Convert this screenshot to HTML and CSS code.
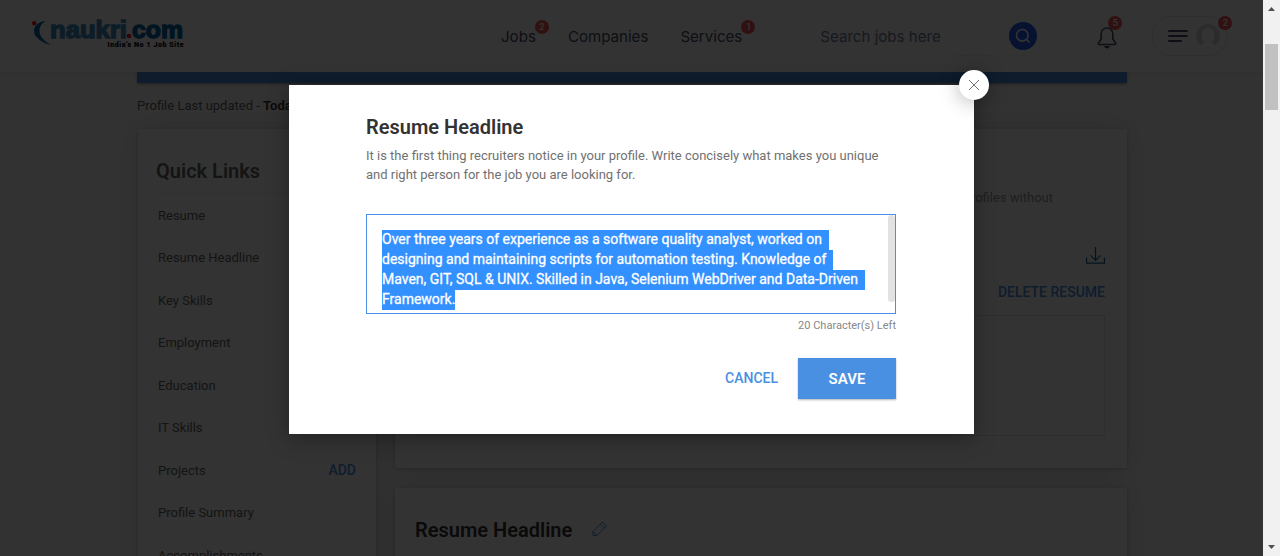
FILE: index.html
```html
<!DOCTYPE html>
<html lang="en">
<head>
<meta charset="utf-8">
<title>Naukri - Profile</title>
<link rel="stylesheet" href="styles.css">
</head>
<body>
<div class="window">
  <div class="page">
    <header class="header">
      <svg class="logo" width="154" height="30" viewBox="0 0 154 30">
        <path d="M13.500 2C7 2.500 2 6.500 2 12c0 6 6 10 16 13.500C11 21 7.500 17 7.500 12c0-4.500 2.500-8 6-10z" fill="#0065aa"/>
        <path d="M5 18c3 4 8 6.500 13 7.500" fill="none" stroke="#3d9ad6" stroke-width="1"/>
        <circle cx="2.200" cy="4.200" r="2.200" fill="#f01020"/>
        <text x="18" y="19" textLength="77" lengthAdjust="spacingAndGlyphs" class="logo-word logo-light">naukri</text>
        <circle cx="97" cy="17" r="2.300" fill="#f01020"/>
        <text x="100" y="19" textLength="51" lengthAdjust="spacingAndGlyphs" class="logo-word logo-dark">com</text>
        <text x="75.500" y="27.500" textLength="76" class="logo-tag">India's No 1 Job Site</text>
      </svg>
      <nav class="nav">
        <span class="nav-item">Jobs<b class="badge nav-badge">2</b></span>
        <span class="nav-item">Companies</span>
        <span class="nav-item">Services<b class="badge nav-badge">1</b></span>
      </nav>
      <div class="search">
        <span>Search jobs here</span>
        <span class="search-button">
          <svg width="16" height="16" viewBox="0 0 16 16" fill="none" stroke="#fff" stroke-width="1.600" stroke-linecap="round"><circle cx="7.300" cy="7.300" r="5.800"/><path d="M11.500 11.500l2.500 2.500"/></svg>
        </span>
      </div>
      <div class="bell">
        <svg width="20" height="23" viewBox="0 0 20 23" fill="none" stroke="#474d6a" stroke-width="1.600" stroke-linejoin="round" stroke-linecap="round"><path d="M10 2C6.500 2 4.200 4.500 4.200 8v5L1.500 17c-.5.900 0 1.500.8 1.500h15.400c.8 0 1.300-.6.800-1.500l-2.700-4V8C15.800 4.500 13.500 2 10 2z"/><path d="M7.500 20.500h5c-.7 2-4.300 2-5 0z" fill="#474d6a" stroke-width="1"/></svg>
        <b class="badge bell-badge">5</b>
      </div>
      <div class="account">
        <span class="burger"><i></i><i></i><i class="short"></i></span>
        <svg width="24" height="24" viewBox="0 0 24 24"><path d="M4.500 21.300A12 12 0 1 1 19.500 21.300C18 20.300 16 19.500 15.500 18.500 17.500 16 18.300 13 18.300 10 18.300 6 16 3.500 12 3.500S5.700 6 5.700 10c0 3 .8 6 2.800 8.500-.5 1-2.500 1.800-4 2.800z" fill="#d5d5d5"/></svg>
        <b class="badge account-badge">2</b>
      </div>
    </header>

    <main class="content">
      <div class="profile-strip"></div>
      <p class="updated">Profile Last updated - <b>Today</b></p>
      <div class="columns">
        <aside class="card links">
          <h2 class="links-title">Quick Links</h2>
          <ul class="links-list">
            <li>Resume</li>
            <li>Resume Headline</li>
            <li>Key Skills</li>
            <li>Employment</li>
            <li>Education</li>
            <li>IT Skills</li>
            <li>Projects<span class="add">ADD</span></li>
            <li>Profile Summary</li>
            <li>Accomplishments</li>
          </ul>
        </aside>
        <div class="sections">
          <section class="card resume">
            <p class="resume-note">recruiters generally do not look at profiles without</p>
            <svg class="download" width="19" height="17" viewBox="0 0 19 17" fill="none" stroke="#0a6c9c" stroke-width="1.200"><path d="M.6 10.500v5.700h17.800v-5.700M9.500 0v13M4.500 8.300l5 5 5-5"/></svg>
            <span class="delete">DELETE RESUME</span>
            <div class="dropzone"></div>
          </section>
          <section class="card headline">
            <h2 class="headline-title">Resume Headline</h2>
            <svg width="16" height="16" viewBox="0 0 16 16" fill="none" stroke="#4a90e2" stroke-width="1" stroke-linejoin="round"><path d="M1 14.500v-4L10.500 1 14.500 5 5 14.500zM8.500 3l4 4M1 10.500l4 4"/></svg>
          </section>
        </div>
      </div>
    </main>

    <div class="overlay">
      <div class="modal">
        <span class="close"><svg width="12" height="12" viewBox="0 0 12 12" stroke="#777" stroke-width="1"><path d="M1 1l10 10M11 1L1 11"/></svg></span>
        <h1 class="modal-title">Resume Headline</h1>
        <p class="modal-text">It is the first thing recruiters notice in your profile. Write concisely what makes you unique<br>and right person for the job you are looking for.</p>
        <div class="field">
          <div class="field-text"><span>Over three years of experience as a software quality analyst, worked on  </span>
<span>designing and maintaining scripts for automation testing. Knowledge of  </span>
<span>Maven, GIT, SQL &amp; UNIX. Skilled in Java, Selenium WebDriver and Data-Driven  </span>
<span>Framework.</span></div>
          <i class="field-scroll"></i>
        </div>
        <p class="counter">20 Character(s) Left</p>
        <div class="actions">
          <span class="cancel">CANCEL</span>
          <button class="save">SAVE</button>
        </div>
      </div>
    </div>
  </div>
  <div class="scrollbar">
    <svg width="7" height="4" viewBox="0 0 7 4"><path d="M0 4L3.500 0 7 4z" fill="#505050"/></svg>
    <i class="thumb"></i>
    <svg class="down" width="7" height="4" viewBox="0 0 7 4"><path d="M0 0h7L3.500 4z" fill="#505050"/></svg>
  </div>
</div>
</body>
</html>
```
FILE: styles.css
```css
* { box-sizing: border-box; margin: 0; padding: 0; }
body { font-family: Roboto, sans-serif; overflow: hidden; }
.window { display: flex; width: 1280px; height: 556px; overflow: hidden; }
.page { position: relative; width: 1263px; height: 556px; overflow: hidden; background: #fafafa; }

.header { position: relative; z-index: 1; display: flex; align-items: center; height: 72px; padding-left: 32px; background: #fff; box-shadow: 0 1px 10px rgba(0, 0, 0, .08); font-family: Inter, sans-serif; }
.logo { flex: none; margin-top: -5px; overflow: visible; }
.logo-word { font: bold 23px "Liberation Sans", sans-serif; stroke-width: 1.300px; }
.logo-light { fill: #3d8fc8; stroke: #3d8fc8; }
.logo-dark { fill: #0065aa; stroke: #0065aa; }
.logo-tag { font: bold 7px Roboto, sans-serif; fill: #000; stroke: #000; stroke-width: .2px; }
.nav { display: flex; gap: 32px; margin-left: 315px; font-size: 15.100px; color: #474d6a; }
.nav-item { position: relative; }
.badge { position: absolute; width: 14px; height: 14px; border-radius: 50%; background: #f05050; color: #fff; font: 600 9px/14px Inter, sans-serif; text-align: center; }
.nav-badge { top: -7px; right: -13px; }
.search { display: flex; flex: none; align-items: center; justify-content: space-between; width: 240px; height: 40px; margin-left: 62px; padding: 0 6px 0 15px; border: 1px solid #f3f3f6; border-radius: 20px; font-size: 15.100px; color: #717b9e; }
.search-button { display: flex; align-items: center; justify-content: center; width: 28px; height: 28px; border-radius: 50%; background: #275df5; }
.bell { position: relative; display: flex; margin: 2px 0 0 53px; }
.bell-badge { top: -10px; right: -5px; }
.account { position: relative; display: flex; align-items: center; gap: 8px; width: 76px; height: 40px; margin-left: 35px; padding-left: 15px; border: 1px solid #e2e4ed; border-radius: 20px; }
.account-badge { top: -1px; right: -5px; }
.burger { display: flex; flex-direction: column; gap: 3px; width: 20px; }
.burger i { height: 2px; border-radius: 1px; background: #474d6a; }
.burger .short { width: 14px; }

.content { width: 990px; margin-left: 137px; }
.profile-strip { height: 11px; border-radius: 0 0 2px 2px; background: #4a90e2; box-shadow: 0 1px 3px rgba(0, 0, 0, .4); }
.updated { height: 46px; padding-top: 14px; font-size: 13px; line-height: 17px; color: #666; }
.updated b { font-weight: 600; color: #333; }
.columns { display: flex; gap: 19px; }
.card { background: #fff; box-shadow: 0 1px 4px rgba(0, 0, 0, .18), 0 0 28px rgba(0, 0, 0, .12); }
.links { width: 238px; height: 480px; margin-left: 1px; padding: 29px 20px 0 18px; }
.links-title { height: 36px; border-bottom: 1px solid #eee; font-weight: 600; font-size: 20px; line-height: 27px; color: #666; }
.links-list { padding-left: 2px; list-style: none; font-size: 13px; color: #666; }
.links-list li { display: flex; justify-content: space-between; align-items: center; height: 42.500px; }
.add { font-weight: 500; font-size: 14px; color: #4a90e2; }
.sections { display: flex; flex-direction: column; gap: 20px; width: 732px; }
.resume { display: flex; flex-direction: column; align-items: flex-end; height: 339px; padding: 59px 22px 0 21px; }
.resume-note { margin-right: 52px; font-size: 13px; line-height: 19px; color: #999; }
.download { margin-top: 40px; }
.delete { margin-top: 19px; font-weight: 500; font-size: 14px; line-height: 18px; color: #4a90e2; }
.dropzone { width: 100%; height: 121px; margin-top: 14px; border: 1px dotted #ccc; }
.headline { display: flex; gap: 20px; height: 200px; padding: 32px 20px; }
.headline svg { margin-top: 1px; }
.headline-title { font-weight: 600; font-size: 20px; line-height: 20px; color: #333; }

.overlay { position: absolute; inset: 0; z-index: 2; padding: 85px 0 0 289px; background: rgba(0, 0, 0, .8); }
.modal { position: relative; width: 685px; height: 349px; padding: 30px 78px 0 77px; background: #fff; box-shadow: 0 4px 20px rgba(0, 0, 0, .35); }
.close { position: absolute; top: -15px; right: -15px; display: flex; align-items: center; justify-content: center; width: 30px; height: 30px; border-radius: 50%; background: #fff; box-shadow: 0 2px 20px rgba(0, 0, 0, .3); }
.modal-title { font-weight: 600; font-size: 20px; line-height: 24px; color: #333; }
.modal-text { margin-top: 7px; font-size: 13px; line-height: 19px; color: #717171; }
.field { display: flex; justify-content: space-between; height: 100px; margin-top: 30px; border: 1px solid #4a90e2; }
.field-text { padding: 15px 0 0 15px; font-size: 14px; line-height: 20px; white-space: pre; color: #fff; -webkit-text-stroke: .3px #fff; }
.field-text span { display: inline-block; height: 20px; line-height: 19px; vertical-align: top; background: #3390ff; }
.field-scroll { width: 7px; height: 87px; border-radius: 4px; background: #e2e2e2; }
.counter { margin-top: 4px; font-size: 11px; line-height: 15px; text-align: right; color: #888; }
.actions { display: flex; align-items: center; justify-content: flex-end; gap: 20px; margin-top: 25px; }
.cancel { padding-bottom: 2px; font-weight: 500; font-size: 14px; color: #4a90e2; }
.save { width: 98px; height: 41px; border: 0; background: #4a90e2; box-shadow: 0 1px 2px rgba(0, 0, 0, .3); font: 600 15px Roboto, sans-serif; color: #fff; }

.scrollbar { display: flex; flex-direction: column; align-items: center; width: 17px; height: 556px; padding: 7px 0; background: #f1f1f1; }
.thumb { width: 13px; height: 66px; margin-top: 33px; background: #c1c1c1; }
.down { margin-top: auto; }
```
